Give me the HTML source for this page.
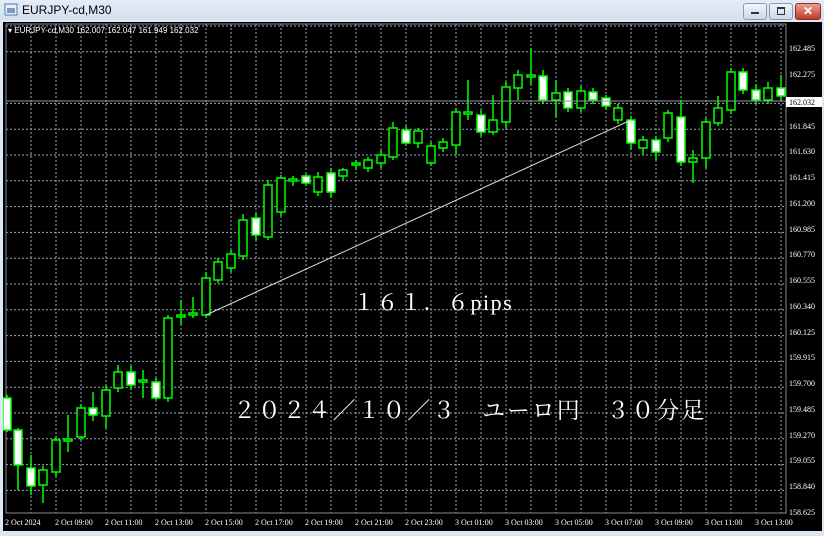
<!DOCTYPE html><html><head><meta charset="utf-8"><style>
body{margin:0;width:824px;height:536px;overflow:hidden;background:#dce7f4;font-family:"Liberation Sans",sans-serif}
.title{position:absolute;left:0;top:0;width:824px;height:20px;background:linear-gradient(#e3ecf7,#d3e0f0);font-size:12px;color:#000}
.title span{position:absolute;left:22px;top:3px}
.btn{position:absolute;top:3px;height:15px;border:1px solid #8799b3;border-radius:3px;background:linear-gradient(#f2f5fa,#ccd8e8)}
.ax{font-family:"Liberation Serif",serif;font-size:8px;fill:#fff}
</style></head><body>
<div class="title"><svg style="position:absolute;left:4px;top:3px" width="14" height="13"><rect x="1" y="1" width="12" height="11" fill="#eaf1fb" stroke="#5577aa"/><rect x="3" y="5" width="8" height="5" fill="#7799cc"/></svg><span>EURJPY-cd,M30</span>
<div class="btn" style="left:743px;width:22px"><div style="position:absolute;left:7px;top:8px;width:8px;height:2px;background:#334"></div></div>
<div class="btn" style="left:769px;width:22px"><div style="position:absolute;left:7px;top:3px;width:6px;height:5px;border:1px solid #334;border-top-width:2px"></div></div>
<div class="btn" style="left:795px;width:24px;background:linear-gradient(#e8a090,#c0392b);border-color:#8a3020"><div style="position:absolute;left:7px;top:0;color:#fff;font-size:12px;font-weight:bold">✕</div></div>
</div>
<svg style="position:absolute;left:3px;top:22px" width="819" height="509">
<rect width="819" height="509" fill="#000"/>
<g id="grid" stroke="#99aabb" stroke-dasharray="2,2" stroke-width="1"></g>
<rect x="3" y="2" width="780" height="489" fill="none" stroke="#888" stroke-width="1"/>
<g id="c"></g>
<line x1="203" y1="293" x2="628" y2="98" stroke="#ddd" stroke-width="1"/>
<line x1="3" y1="79" x2="783" y2="79" stroke="#999" stroke-width="1"/>
<rect x="783" y="75" width="36" height="10" fill="#fff"/>
<text class="ax" x="786" y="83" style="fill:#000">162.032</text>
<g class="ax">
<text x="786" y="29">162.485</text><text x="786" y="55">162.275</text><text x="786" y="107">161.845</text><text x="786" y="132">161.630</text><text x="786" y="158">161.415</text><text x="786" y="184">161.200</text><text x="786" y="210">160.985</text><text x="786" y="235">160.770</text><text x="786" y="261">160.555</text><text x="786" y="287">160.340</text><text x="786" y="313">160.125</text><text x="786" y="338">159.915</text><text x="786" y="364">159.700</text><text x="786" y="390">159.485</text><text x="786" y="416">159.270</text><text x="786" y="441">159.055</text><text x="786" y="467">158.840</text><text x="786" y="493">158.625</text>
<text x="2" y="503">2 Oct 2024</text><text x="52" y="503">2 Oct 09:00</text><text x="102" y="503">2 Oct 11:00</text><text x="152" y="503">2 Oct 13:00</text><text x="202" y="503">2 Oct 15:00</text><text x="252" y="503">2 Oct 17:00</text><text x="302" y="503">2 Oct 19:00</text><text x="352" y="503">2 Oct 21:00</text><text x="402" y="503">2 Oct 23:00</text><text x="452" y="503">3 Oct 01:00</text><text x="502" y="503">3 Oct 03:00</text><text x="552" y="503">3 Oct 05:00</text><text x="602" y="503">3 Oct 07:00</text><text x="652" y="503">3 Oct 09:00</text><text x="702" y="503">3 Oct 11:00</text><text x="752" y="503">3 Oct 13:00</text>
</g>
<text x="5" y="11" style="font-size:8px;fill:#fff;font-family:'Liberation Sans',sans-serif">▾ EURJPY-cd,M30  162.007 162.047 161.949 162.032</text>
<text x="350" y="288" style="font-family:'Liberation Serif','Noto Serif CJK SC',serif;font-size:22px;fill:#fff;letter-spacing:1.5px">１６１．６pips</text>
<text x="230" y="396" style="font-family:'Liberation Serif','Noto Serif CJK SC',serif;font-size:23px;fill:#fff;letter-spacing:1.9px">２０２４／１０／３　ユーロ円　３０分足</text>
</svg>
<script>
var g=document.getElementById('grid'),s='';
for(var x=6;x<783;x+=25)s+='<line x1="'+(x-3)+'" y1="2" x2="'+(x-3)+'" y2="491"/>';
for(var i=0;i<19;i++){var y=26+i*25.8-22;if(i!=2)s+='<line x1="3" y1="'+y+'" x2="783" y2="'+y+'"/>';}
g.innerHTML=s;
var C=[[7,398,430,395,432,1],[18,430,465,428,490,1],[31,468,486,455,495,1],[43,470,485,466,503,0],[56,440,472,436,477,0],[68,439,441,415,452,0],[81,408,437,404,440,0],[93,408,415,392,421,1],[106,390,416,385,428,0],[118,372,388,365,392,0],[131,372,385,366,390,1],[143,380,382,370,398,0],[156,382,398,378,400,1],[168,318,398,315,402,0],[181,315,317,300,325,0],[193,313,315,297,318,0],[206,278,315,272,318,0],[218,262,280,258,283,0],[231,254,268,250,272,0],[243,220,256,214,260,0],[256,218,235,213,240,1],[268,185,237,180,240,0],[281,178,212,175,216,0],[293,179,181,176,186,0],[306,176,183,174,186,1],[318,177,192,172,196,0],[331,173,192,168,198,1],[343,170,176,168,180,0],[356,163,165,160,170,0],[368,160,168,157,172,0],[381,155,163,150,168,0],[393,128,157,122,160,0],[406,130,143,126,146,1],[418,131,143,128,148,0],[431,146,163,142,166,0],[443,142,148,138,152,0],[456,112,145,108,155,0],[468,112,114,80,120,0],[481,115,132,110,136,1],[493,120,132,95,135,0],[506,87,122,82,128,0],[518,75,88,70,100,0],[531,75,77,48,85,0],[543,76,100,70,104,1],[556,93,100,80,118,0],[568,92,108,88,112,1],[581,91,108,86,112,0],[593,92,100,88,104,1],[606,98,106,95,110,1],[618,108,120,104,124,0],[631,120,143,116,150,1],[643,140,148,136,155,0],[656,140,152,136,160,1],[668,113,138,110,142,0],[681,117,162,100,166,1],[693,158,162,150,183,0],[706,122,158,118,168,0],[718,108,123,96,126,0],[731,72,110,68,114,0],[743,72,90,68,94,1],[756,90,100,84,104,1],[768,88,100,82,104,0],[781,88,96,75,100,1]];
var h='';C.forEach(function(c){var x=c[0]-3,t=c[1]-22,b=c[2]-22,wt=c[3]-22,wb=c[4]-22;
h+='<line x1="'+x+'" y1="'+wt+'" x2="'+x+'" y2="'+wb+'" stroke="#00ff00" stroke-width="1.5"/>';
var hh=Math.max(b-t,1);
h+='<rect x="'+(x-4)+'" y="'+t+'" width="8" height="'+hh+'" fill="'+(c[5]?'#fff':'#000')+'" stroke="#00ff00" stroke-width="1.5"/>';});
document.getElementById('c').innerHTML=h;
</script>
</body></html>
